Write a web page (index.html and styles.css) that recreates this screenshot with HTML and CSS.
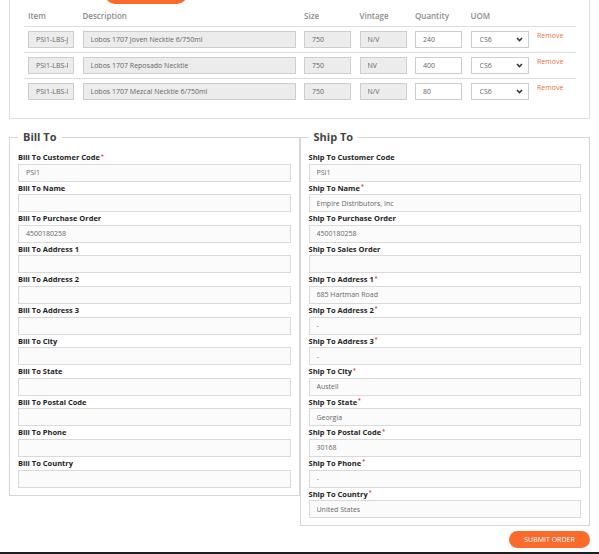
FILE: index.html
```html
<!DOCTYPE html>
<html lang="en">
<head>
    <meta charset="UTF-8">
    <meta name="viewport" content="width=device-width, initial-scale=1.0">
    <title>Order Entry</title>
    <link rel="stylesheet" href="styles.css">
</head>
<body>
    <div class="page">
        <div class="order-card">
            <div class="card-actions">
                <button type="button" class="btn-orange btn-add" aria-label="Add item"></button>
            </div>
            <div class="items">
                <div class="item-row item-head">
                    <span>Item</span>
                    <span>Description</span>
                    <span>Size</span>
                    <span>Vintage</span>
                    <span>Quantity</span>
                    <span>UOM</span>
                    <span></span>
                </div>

                <div class="item-row">
                    <input type="text" class="readonly item-code" value="PSI1-LBS-JOVEN" readonly>
                    <input type="text" class="readonly" value="Lobos 1707 Joven Necktie 6/750ml" readonly>
                    <input type="text" class="readonly" value="750" readonly>
                    <input type="text" class="readonly" value="N/V" readonly>
                    <input type="text" value="240">
                    <div class="select-wrap">
                        <select><option>CS6</option></select>
                        <svg class="chevron" width="7" height="5" viewBox="0 0 7 5"><path d="M1 1 L3.5 3.6 L6 1" fill="none" stroke="#333" stroke-width="1.5"/></svg>
                    </div>
                    <a href="#" class="remove">Remove</a>
                </div>

                <div class="item-row">
                    <input type="text" class="readonly item-code" value="PSI1-LBS-REPOSADO" readonly>
                    <input type="text" class="readonly" value="Lobos 1707 Reposado Necktie" readonly>
                    <input type="text" class="readonly" value="750" readonly>
                    <input type="text" class="readonly" value="NV" readonly>
                    <input type="text" value="400">
                    <div class="select-wrap">
                        <select><option>CS6</option></select>
                        <svg class="chevron" width="7" height="5" viewBox="0 0 7 5"><path d="M1 1 L3.5 3.6 L6 1" fill="none" stroke="#333" stroke-width="1.5"/></svg>
                    </div>
                    <a href="#" class="remove">Remove</a>
                </div>

                <div class="item-row">
                    <input type="text" class="readonly item-code" value="PSI1-LBS-MEZCAL" readonly>
                    <input type="text" class="readonly" value="Lobos 1707 Mezcal Necktie 6/750ml" readonly>
                    <input type="text" class="readonly" value="750" readonly>
                    <input type="text" class="readonly" value="N/V" readonly>
                    <input type="text" value="80">
                    <div class="select-wrap">
                        <select><option>CS6</option></select>
                        <svg class="chevron" width="7" height="5" viewBox="0 0 7 5"><path d="M1 1 L3.5 3.6 L6 1" fill="none" stroke="#333" stroke-width="1.5"/></svg>
                    </div>
                    <a href="#" class="remove">Remove</a>
                </div>
            </div>
        </div>

        <form class="address-form" id="orderForm">
            <fieldset class="address">
                <legend>Bill To</legend>
                <div class="field"><label>Bill To Customer Code<span class="req">*</span></label><input type="text" value="PSI1"></div>
                <div class="field"><label>Bill To Name</label><input type="text"></div>
                <div class="field"><label>Bill To Purchase Order</label><input type="text" value="4500180258"></div>
                <div class="field"><label>Bill To Address 1</label><input type="text"></div>
                <div class="field"><label>Bill To Address 2</label><input type="text"></div>
                <div class="field"><label>Bill To Address 3</label><input type="text"></div>
                <div class="field"><label>Bill To City</label><input type="text"></div>
                <div class="field"><label>Bill To State</label><input type="text"></div>
                <div class="field"><label>Bill To Postal Code</label><input type="text"></div>
                <div class="field"><label>Bill To Phone</label><input type="text"></div>
                <div class="field"><label>Bill To Country</label><input type="text"></div>
            </fieldset>

            <fieldset class="address">
                <legend>Ship To</legend>
                <div class="field"><label>Ship To Customer Code</label><input type="text" value="PSI1"></div>
                <div class="field"><label>Ship To Name<span class="req">*</span></label><input type="text" value="Empire Distributors, Inc"></div>
                <div class="field"><label>Ship To Purchase Order</label><input type="text" value="4500180258"></div>
                <div class="field"><label>Ship To Sales Order</label><input type="text"></div>
                <div class="field"><label>Ship To Address 1<span class="req">*</span></label><input type="text" value="685 Hartman Road"></div>
                <div class="field"><label>Ship To Address 2<span class="req">*</span></label><input type="text" value="-"></div>
                <div class="field"><label>Ship To Address 3<span class="req">*</span></label><input type="text" value="-"></div>
                <div class="field"><label>Ship To City<span class="req">*</span></label><input type="text" value="Austell"></div>
                <div class="field"><label>Ship To State<span class="req">*</span></label><input type="text" value="Georgia"></div>
                <div class="field"><label>Ship To Postal Code<span class="req">*</span></label><input type="text" value="30168"></div>
                <div class="field"><label>Ship To Phone<span class="req">*</span></label><input type="text" value="-"></div>
                <div class="field"><label>Ship To Country<span class="req">*</span></label><input type="text" value="United States"></div>
            </fieldset>
        </form>

        <div class="form-actions">
            <button type="submit" form="orderForm" class="btn-orange btn-submit">SUBMIT ORDER</button>
        </div>
    </div>
</body>
</html>
```

FILE: styles.css
```css
body {
    margin: 0;
    font-family: 'Open Sans', 'Liberation Sans', sans-serif;
    background: #fff;
    color: #222;
}

.page {
    display: flex;
    flex-direction: column;
    height: 100vh;
    box-sizing: border-box;
    border-bottom: 2px solid #1e1e1e;
    overflow: hidden;
}

/* top card with the product lines */
.order-card {
    margin: -27px 9px 0 9px;
    border: 1px solid #dedede;
    padding: 10px 13px 14px 14px;
}

.btn-orange {
    border: none;
    background-color: #fa6a2a;
    color: white;
    border-radius: 10px;
    cursor: pointer;
    font-family: inherit;
    padding: 0;
}

.btn-add {
    height: 20px;
    width: 82px;
    margin-left: 81px;
    display: block;
}

.item-row {
    display: grid;
    grid-template-columns: 46px 213px 47px 47px 47px 58px auto;
    column-gap: 8.5px;
    padding: 4px 0 4px 4px;
    border-bottom: 1px solid #dcdcdc;
    align-items: start;
}

.item-row:last-child {
    border-bottom: none;
}

.item-head {
    height: 23px;
    box-sizing: border-box;
    padding: 0 0 0 4px;
    align-items: center;
    font-size: 8px;
    font-weight: 600;
    color: #8c8c8c;
}

.item-row input,
.item-row select {
    display: block;
    height: 17px;
    box-sizing: border-box;
    border: 1px solid #cdcdcd;
    padding: 0 3px 0 7px;
    font-family: inherit;
    font-size: 7px;
    line-height: 15px;
    color: #666;
    -webkit-text-fill-color: #666;
    background: #fff;
    width: 100%;
    margin: 0;
}

.item-row input.readonly {
    background: #ececec;
}

.item-row input.item-code {
    padding-right: 5px;
}

.select-wrap {
    position: relative;
    height: 17px;
}

.item-row select {
    appearance: none;
    -webkit-appearance: none;
    border-radius: 0;
    padding: 0 0 0 8px;
}

.chevron {
    position: absolute;
    right: 6px;
    top: 6px;
}

.remove {
    color: #e8703c;
    font-size: 7px;
    line-height: 9px;
    text-decoration: none;
}

/* bill to / ship to */
.address-form {
    display: flex;
    align-items: flex-start;
    margin: 11px 9px 0 9px;
}

.address {
    flex: 1;
    min-width: 0;
    margin: 0;
    border: 1px solid #d6d6d6;
    padding: 7px 8px 7px 8px;
}

.address legend {
    padding: 0 5px;
    font-size: 11px;
    line-height: 14px;
    font-weight: 700;
    color: #444;
}

.field {
    display: flex;
    flex-direction: column;
}

.field label {
    font-size: 7.5px;
    line-height: 12.6px;
    font-weight: 700;
    color: #222;
}

.req {
    color: #e03a2f;
    font-size: 5px;
    line-height: 0;
    vertical-align: 2.5px;
    margin-left: 1px;
}

.field input {
    height: 18px;
    box-sizing: border-box;
    border: 1px solid #d9d9d9;
    background: #fbfbfb;
    padding: 0 7px;
    font-family: inherit;
    font-size: 7px;
    color: #666;
    margin: 0;
}

.form-actions {
    display: flex;
    justify-content: flex-end;
    margin: 5px 9px 0 9px;
}

.btn-submit {
    width: 81px;
    height: 17px;
    font-size: 7px;
    border-radius: 9px;
}
```
